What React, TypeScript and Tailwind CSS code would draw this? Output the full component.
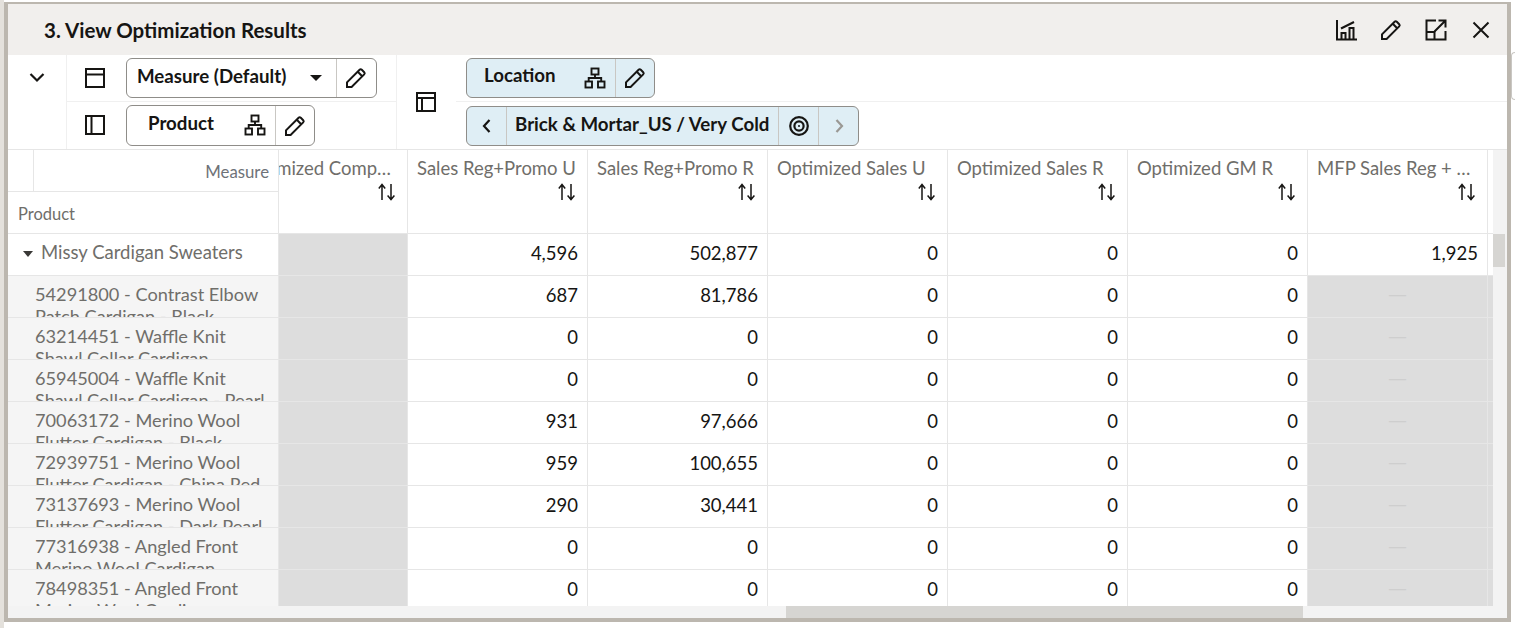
import React from 'react';

const PencilIcon = () => (
  <svg width="22" height="22" viewBox="0 0 22 22" fill="none" stroke="#161513" strokeWidth="2">
    <path d="M2 20v-4.6L14.6 2.8a1.6 1.6 0 0 1 2.2 0l2.4 2.4a1.6 1.6 0 0 1 0 2.2L6.6 20z" />
    <path d="M12.8 4.8l4.4 4.4" />
  </svg>
);

const HierarchyIcon = () => (
  <svg width="22" height="22" viewBox="0 0 22 22" fill="none" stroke="#161513" strokeWidth="1.9">
    <rect x="7.5" y="1.5" width="7" height="6" />
    <rect x="1.5" y="14.5" width="6.5" height="6" />
    <rect x="14" y="14.5" width="6.5" height="6" />
    <path d="M11 7.5v3.5M4.7 14.5V11h12.5v3.5" />
  </svg>
);

const SortIcon = () => (
  <svg width="18" height="18" viewBox="0 0 18 18" fill="none" stroke="#161513" strokeWidth="1.5">
    <path d="M4 17V1.5M0.8 5.5L4 1.5l3.2 4" />
    <path d="M13 1v15.5M9.6 12.5l3.4 4 3.4-4" />
  </svg>
);

const columns = ['Sales Reg+Promo U', 'Sales Reg+Promo R', 'Optimized Sales U', 'Optimized Sales R', 'Optimized GM R', 'MFP Sales Reg + …'];

const rows = [
  { a: '687', b: '81,786', l1: '54291800 - Contrast Elbow', l2: 'Patch Cardigan - Black' },
  { a: '0', b: '0', l1: '63214451 - Waffle Knit', l2: 'Shawl Collar Cardigan' },
  { a: '0', b: '0', l1: '65945004 - Waffle Knit', l2: 'Shawl Collar Cardigan - Pearl' },
  { a: '931', b: '97,666', l1: '70063172 - Merino Wool', l2: 'Flutter Cardigan - Black' },
  { a: '959', b: '100,655', l1: '72939751 - Merino Wool', l2: 'Flutter Cardigan - China Red' },
  { a: '290', b: '30,441', l1: '73137693 - Merino Wool', l2: 'Flutter Cardigan - Dark Pearl' },
  { a: '0', b: '0', l1: '77316938 - Angled Front', l2: 'Merino Wool Cardigan' },
  { a: '0', b: '0', l1: '78498351 - Angled Front', l2: 'Merino Wool Cardigan' },
];

const NumCell = ({ value }: { value: string }) => (
  <div className="w-[180px] shrink-0 border-r border-[#e6e6e6] pr-[9px] text-right leading-[38px]">{value}</div>
);

export default function App() {
  return (
    <div className="flex w-[1515px] h-[628px] bg-white text-[18.5px] text-[#161513] overflow-hidden font-['Lato','Noto_Sans',sans-serif]">
      <div className="w-1 h-full shrink-0 bg-[#e4e1dc]" />

      <div className="w-[1507px] h-[620px] shrink-0 mt-[2px] border-x-4 border-t-2 border-b-4 border-[#bcb7af] flex flex-col">
        {/* title bar */}
        <div className="h-[51px] shrink-0 bg-[#f1efed] flex items-center pl-9 pr-[15px]">
          <div className="text-[20.5px] font-bold flex-1 pt-[2px]">3. View Optimization Results</div>
          <div className="flex items-center gap-[23px]">
            <svg width="22" height="22" viewBox="0 0 22 22" fill="none" stroke="#161513" strokeWidth="2">
              <path d="M2 1v19.5h20" />
              <path d="M6 9.5L19 3" />
              <path d="M6.5 20v-6h4v6M14.5 20V9h4v11" />
            </svg>
            <PencilIcon />
            <svg width="22" height="22" viewBox="0 0 22 22" fill="none" stroke="#161513" strokeWidth="2">
              <path d="M20.5 12v8.5h-19v-19H11" />
              <path d="M1.5 13h8v7.5" />
              <path d="M9.5 12.5L20 2M13.5 1.5h7v7" />
            </svg>
            <svg width="22" height="22" viewBox="0 0 22 22" fill="none" stroke="#161513" strokeWidth="2">
              <path d="M3.5 3.5l15 15M18.5 3.5l-15 15" />
            </svg>
          </div>
        </div>

        {/* toolbar */}
        <div className="h-[94px] shrink-0 flex bg-white text-[18.7px]">
          <div className="w-[59px] shrink-0 border-r border-[#f0f0f0] flex justify-center pt-[12px] pr-[1px]">
            <svg width="20" height="20" viewBox="0 0 20 20" fill="none" stroke="#161513" strokeWidth="2.2">
              <path d="M3.5 7l6.5 6.5L16.5 7" />
            </svg>
          </div>

          <div className="w-[330px] shrink-0 border-r border-[#f0f0f0] flex flex-col">
            <div className="h-[47px] border-b border-[#f0f0f0] flex items-start pt-[3px]">
              <div className="w-[59px] flex justify-center pt-[10px] pr-1">
                <svg width="20" height="20" viewBox="0 0 20 20" fill="none" stroke="#161513" strokeWidth="2">
                  <rect x="1" y="1" width="18" height="18" />
                  <path d="M1 6.5h18" />
                </svg>
              </div>
              <div className="w-[251px] h-10 rounded-md border border-[#8f8d89] flex items-center">
                <div className="w-[209px] flex items-center pl-[10px] font-bold pb-[3px]">
                  <span className="flex-1">Measure (Default)</span>
                  <span className="w-0 h-0 mr-[14px] mt-1 border-x-[6px] border-x-transparent border-t-[6px] border-t-[#161513]" />
                </div>
                <div className="h-full flex-1 border-l border-[#c9c7c3] flex items-center justify-center pr-[1px]">
                  <PencilIcon />
                </div>
              </div>
            </div>
            <div className="flex items-start pt-[3px]">
              <div className="w-[59px] flex justify-center pt-[10px] pr-1">
                <svg width="20" height="20" viewBox="0 0 20 20" fill="none" stroke="#161513" strokeWidth="2">
                  <rect x="1" y="1" width="18" height="18" />
                  <path d="M6.5 1v18" />
                </svg>
              </div>
              <div className="w-[189px] h-[41px] rounded-md border border-[#8f8d89] flex items-center">
                <div className="w-[148px] flex items-center pl-[21px] pr-[9px] font-bold">
                  <span className="flex-1 pb-[5px]">Product</span>
                  <HierarchyIcon />
                </div>
                <div className="h-full flex-1 border-l border-[#c9c7c3] flex items-center justify-center pr-[1px]">
                  <PencilIcon />
                </div>
              </div>
            </div>
          </div>

          <div className="w-[59px] shrink-0 flex items-center justify-center pb-[1px] pr-[1px]">
            <svg width="20" height="20" viewBox="0 0 20 20" fill="none" stroke="#161513" strokeWidth="2">
              <rect x="1" y="1" width="18" height="18" />
              <path d="M1 6h18M6 19V6" />
            </svg>
          </div>

          <div className="flex-1 flex flex-col pl-[10px]">
            <div className="h-[47px] pt-[3px] border-b border-[#f0f0f0] -ml-[10px] pl-[10px]">
              <div className="w-[189px] h-10 rounded-md border border-[#8f8d89] bg-[#dfeef5] flex items-center">
                <div className="w-[148px] flex items-center pl-[17px] pr-[9px] font-bold">
                  <span className="flex-1 pb-[5px]">Location</span>
                  <HierarchyIcon />
                </div>
                <div className="h-full flex-1 border-l border-[#c9c7c3] flex items-center justify-center pr-[1px]">
                  <PencilIcon />
                </div>
              </div>
            </div>
            <div className="pt-1">
              <div className="w-[393px] h-10 rounded-md border border-[#8f8d89] bg-[#dfeef5] flex items-center">
                <div className="w-[40px] h-full border-r border-[#c9c7c3] flex items-center justify-center">
                  <svg width="14" height="16" viewBox="0 0 14 16" fill="none" stroke="#161513" strokeWidth="2.2">
                    <path d="M9.5 2L4 8l5.5 6" />
                  </svg>
                </div>
                <div className="w-[272px] h-full border-r border-[#c9c7c3] flex items-center pl-[8px] font-bold pb-[3px]">
                  Brick &amp; Mortar_US / Very Cold
                </div>
                <div className="w-[40px] h-full border-r border-[#c9c7c3] flex items-center justify-center">
                  <svg width="22" height="22" viewBox="0 0 22 22" fill="none" stroke="#161513" strokeWidth="2.2">
                    <circle cx="11" cy="11" r="8.8" />
                    <circle cx="11" cy="11" r="4.6" />
                    <circle cx="11" cy="11" r="1" fill="#161513" stroke="none" />
                  </svg>
                </div>
                <div className="flex-1 flex items-center justify-center">
                  <svg width="14" height="16" viewBox="0 0 14 16" fill="none" stroke="#9a9894" strokeWidth="2.2">
                    <path d="M4.5 2L10 8l-5.5 6" />
                  </svg>
                </div>
              </div>
            </div>
          </div>
        </div>

        {/* table */}
        <div className="flex-1 min-h-0 flex border-t border-[#e6e6e6]">
          <div className="flex-1 min-w-0 flex flex-col">
            <div className="flex-1 min-h-0 overflow-hidden">
              {/* header */}
              <div className="h-[84px] flex border-b border-[#e6e6e6]">
                <div className="w-[271px] shrink-0 border-r border-[#e6e6e6] flex flex-col text-[#6f6e6a]">
                  <div className="h-[42px] flex border-b border-[#e6e6e6]">
                    <div className="w-[26px] border-r border-[#e6e6e6]" />
                    <div className="flex-1 text-right pr-[9px] pt-[9px] text-[16.8px] text-[#6e7278]">Measure</div>
                  </div>
                  <div className="pl-[10px] pt-[10px] text-[16.5px]">Product</div>
                </div>
                <div className="w-[129px] shrink-0 border-r border-[#e6e6e6] pr-[11px] pt-[5px] overflow-hidden">
                  <div className="flex justify-end pr-[5px] text-[#6f6e6a] whitespace-nowrap">Optimized Comp…</div>
                  <div className="flex justify-end"><SortIcon /></div>
                </div>
                {columns.map(c => (
                  <div key={c} className="w-[180px] shrink-0 border-r border-[#e6e6e6] pl-[9px] pr-[11px] pt-[5px]">
                    <div className="text-[#6f6e6a] whitespace-nowrap">{c}</div>
                    <div className="flex justify-end"><SortIcon /></div>
                  </div>
                ))}
              </div>

              {/* top level row */}
              <div className="h-[42px] flex border-b border-[#e6e6e6]">
                <div className="w-[271px] shrink-0 border-r border-[#e6e6e6] flex items-start pl-[15px] pt-[5px] text-[#6f6e6a]">
                  <span className="w-0 h-0 mt-[12px] mr-[8px] border-x-[5px] border-x-transparent border-t-[6px] border-t-[#3a3937]" />
                  Missy Cardigan Sweaters
                </div>
                <div className="w-[129px] shrink-0 bg-[#dddddd] border-r border-[#e6e6e6]" />
                <NumCell value="4,596" />
                <NumCell value="502,877" />
                <NumCell value="0" />
                <NumCell value="0" />
                <NumCell value="0" />
                <NumCell value="1,925" />
              </div>

              {rows.map(r => (
                <div key={r.l1} className="h-[42px] flex border-b border-[#e6e6e6]">
                  <div className="w-[271px] shrink-0 bg-[#f5f5f5] border-r border-[#e6e6e6] pl-[27px] pt-[7px] overflow-hidden text-[18.2px] text-[#6f6e6a] leading-[22px] whitespace-nowrap">
                    <div>{r.l1}</div>
                    <div>{r.l2}</div>
                  </div>
                  <div className="w-[129px] shrink-0 bg-[#dddddd] border-r border-[#e6e6e6]" />
                  <NumCell value={r.a} />
                  <NumCell value={r.b} />
                  <NumCell value="0" />
                  <NumCell value="0" />
                  <NumCell value="0" />
                  <div className="w-[180px] shrink-0 bg-[#dddddd] border-r border-[#e6e6e6] text-center leading-[36px] text-[#cecece] font-['Noto_Sans']">—</div>
                  <div className="flex-1 bg-[#dddddd]" />
                </div>
              ))}
            </div>

            {/* horizontal scrollbar */}
            <div className="h-3 shrink-0 bg-[#f3f3f3] pl-[778px]">
              <div className="w-[517px] h-full bg-[#d6d5d2]" />
            </div>
          </div>

          {/* vertical scrollbar */}
          <div className="w-[14px] shrink-0 bg-[#f3f3f3] pt-[84px]">
            <div className="w-3 h-[33px] bg-[#d6d5d2]" />
          </div>
        </div>
      </div>

      <div className="flex-1 pt-[52px]">
        <div className="h-[48px] rounded-l-md border border-r-0 border-[#c9c7c3]" />
      </div>
    </div>
  );
}
